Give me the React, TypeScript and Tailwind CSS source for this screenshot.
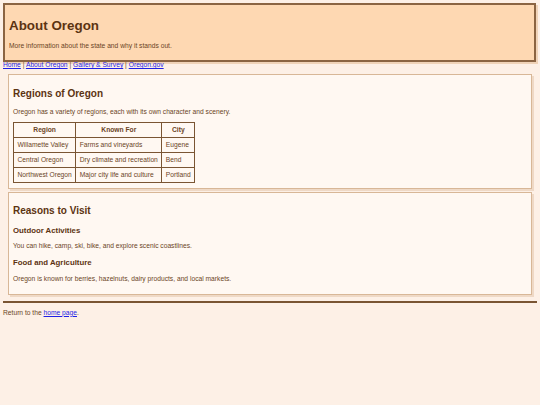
const regions = [
  { name: "Willamette Valley", known: "Farms and vineyards", city: "Eugene" },
  { name: "Central Oregon", known: "Dry climate and recreation", city: "Bend" },
  { name: "Northwest Oregon", known: "Major city life and culture", city: "Portland" },
];

const links = ["Home", "About Oregon", "Gallery & Survey", "Oregon.gov"];

// shared cell look for the regions table
const cell = "border border-[#7a5533] px-[3.5px] py-[3px]";

export default function App() {
  return (
    <div className="min-h-screen bg-[#fdf0e6] p-[3px] font-['Liberation_Sans',Arial,sans-serif] text-[6.7px] leading-[8px] text-[#6b4425]">
      <header className="mr-px border-2 border-[#8b6442] bg-[#fed8b2] px-[4px] pt-[13px] pb-[10px] shadow-[2px_2px_0_#f0d3b8]">
        <h1 className="text-[13.4px] leading-[16px] font-bold text-[#5c3311]">About Oregon</h1>
        <p className="mt-[8px]">More information about the state and why it stands out.</p>
      </header>

      <nav className="leading-[6px]">
        {links.map((l, i) => (
          <span key={l}>
            {i > 0 && " | "}
            <a href="#" className="text-[#1f1fe6] underline">
              {l}
            </a>
          </span>
        ))}
      </nav>

      <section className="mx-[5px] mt-[6px] border border-[#d8b797] bg-[#fff8f2] px-[4px] pt-[5px] pb-[5px] shadow-[2px_2px_0_#efd9c6]">
        <h2 className="mt-[8px] text-[10px] leading-[12px] font-bold text-[#5c3311]">Regions of Oregon</h2>
        <p className="mt-[8px]">Oregon has a variety of regions, each with its own character and scenery.</p>
        <table className="mt-[6px] border-collapse border border-[#7a5533]">
          <thead>
            <tr>
              <th className={`${cell} text-center font-bold`}>Region</th>
              <th className={`${cell} text-center font-bold`}>Known For</th>
              <th className={`${cell} text-center font-bold`}>City</th>
            </tr>
          </thead>
          <tbody>
            {regions.map((r) => (
              <tr key={r.name}>
                <td className={cell}>{r.name}</td>
                <td className={cell}>{r.known}</td>
                <td className={cell}>{r.city}</td>
              </tr>
            ))}
          </tbody>
        </table>
      </section>

      <section className="mx-[5px] mt-[3px] border border-[#d8b797] bg-[#fff8f2] px-[4px] pt-[5px] pb-[5px] shadow-[2px_2px_0_#efd9c6]">
        <h2 className="mt-[7px] text-[10px] leading-[12px] font-bold text-[#5c3311]">Reasons to Visit</h2>
        <h3 className="mt-[9px] text-[7.8px] leading-[9px] font-bold text-[#5c3311]">Outdoor Activities</h3>
        <p className="mt-[6.5px]">You can hike, camp, ski, bike, and explore scenic coastlines.</p>
        <h3 className="mt-[8px] text-[7.8px] leading-[9px] font-bold text-[#5c3311]">Food and Agriculture</h3>
        <p className="mt-[8px] mb-[6.5px]">Oregon is known for berries, hazelnuts, dairy products, and local markets.</p>
      </section>

      <hr className="mt-[6px] border-0 border-t-2 border-[#7a5533]" />
      <p className="mt-[5.5px]">
        Return to the{" "}
        <a href="#" className="text-[#1f1fe6] underline">
          home page
        </a>
        .
      </p>
    </div>
  );
}
